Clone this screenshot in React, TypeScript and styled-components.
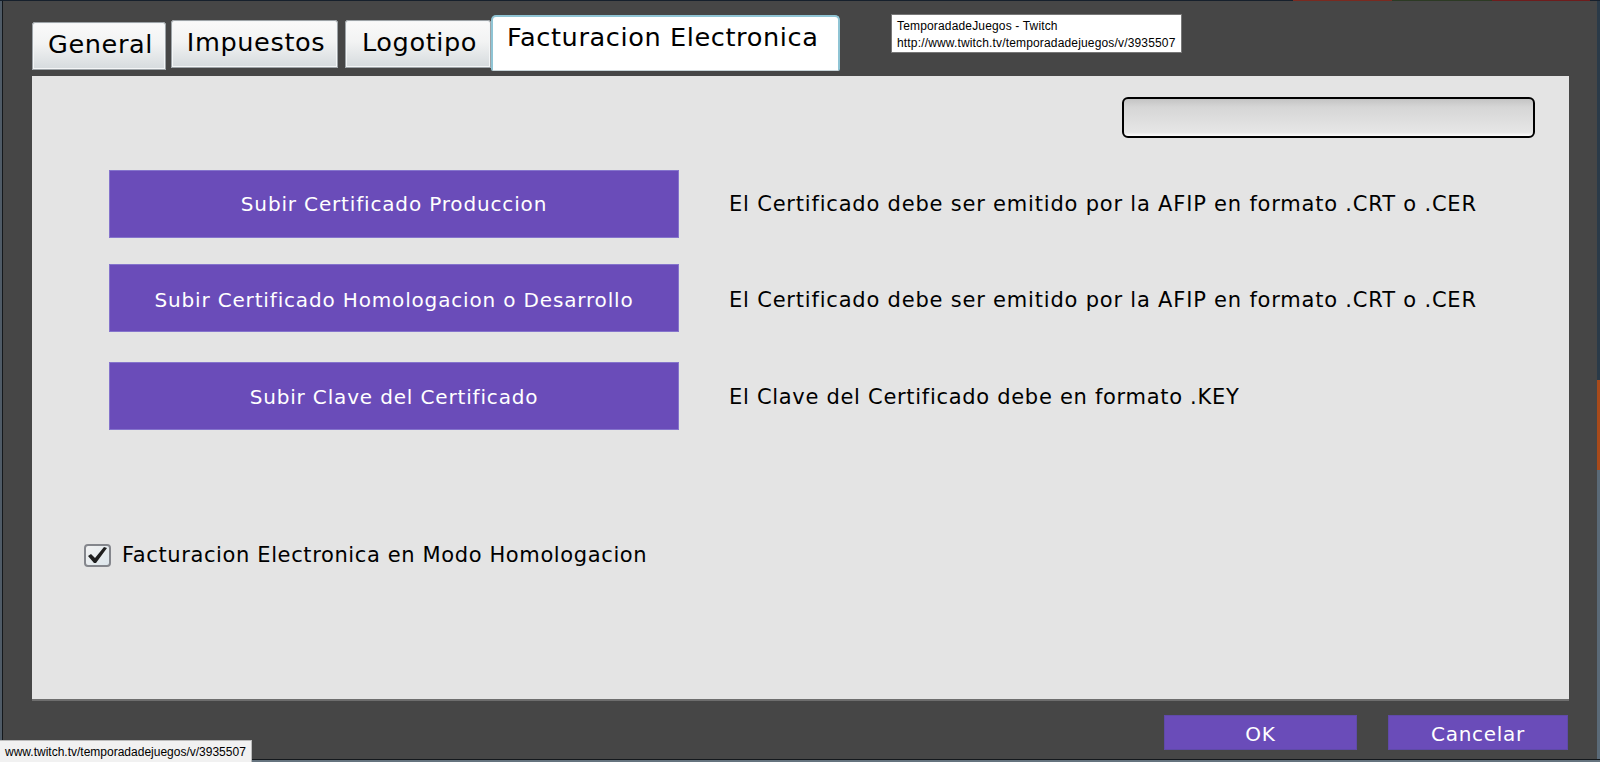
import React from "react";
import styled, { createGlobalStyle } from "styled-components";

const Global = createGlobalStyle`
  html, body { margin: 0; padding: 0; width: 1600px; height: 762px; overflow: hidden; }
  #root { width: 1600px; height: 762px; }
`;

const Desktop = styled.div`
  position: relative;
  width: 1600px;
  height: 762px;
  box-sizing: border-box;
  padding: 1px 3px 3px 3px;
  background:
    linear-gradient(90deg, #16202c 0, #16202c 1293px, #7a2a20 1293px, #7a2a20 1392px, #2c3a24 1392px, #2c3a24 1492px, #6e1c1c 1492px, #6e1c1c 1590px, #16202c 1590px) top left / 100% 1px no-repeat,
    linear-gradient(180deg, #14181c 0, #14181c 1px, #66747f 1px) bottom left / 100% 3px no-repeat,
    linear-gradient(90deg, #4f5b67 0, #4f5b67 2px, #14181c 2px) left top / 3px 100% no-repeat,
    linear-gradient(180deg, #2a3a48 0, #2a3a48 380px, #a84a1a 380px, #a84a1a 470px, #5a6a78 470px) right top / 3px 100% no-repeat;
  font-family: "DejaVu Sans", Verdana, sans-serif;
  color: #000;
`;

const Dialog = styled.div`
  height: 100%;
  box-sizing: border-box;
  background: #464646;
  padding: 14px 28px 9px 29px;
  display: flex;
  flex-direction: column;
`;

const TabBar = styled.div`
  display: flex;
  align-items: flex-start;
  height: 55px;
  margin-bottom: 6px;
`;

const Tab = styled.div<{ $top: number; $width: number; $gap: number }>`
  box-sizing: border-box;
  width: ${(p) => p.$width}px;
  height: 48px;
  margin-top: ${(p) => p.$top}px;
  margin-right: ${(p) => p.$gap}px;
  padding-left: 3px;
  border: 1px solid #f3f6f8;
  outline: 1px solid #9da3a7;
  outline-offset: -1px;
  box-shadow: inset 0 0 0 1px #f4f6f7;
  border-radius: 3px 3px 0 0;
  background: linear-gradient(180deg, #fafafa 0%, #f2f3f3 45%, #d6dbde 100%);
  font-size: 25.6px;
  letter-spacing: 0.6px;
  line-height: 43px;
  text-align: center;
  white-space: nowrap;
`;

const ActiveTab = styled.div`
  box-sizing: border-box;
  width: 349px;
  height: 56px;
  border-radius: 5px 5px 2px 2px;
  background: #fff;
  border: 2px solid #8fc4d4;
  border-bottom: 1px solid #c9d4d8;
  font-size: 25.6px;
  letter-spacing: 0.6px;
  line-height: 40px;
  padding-left: 14px;
  white-space: nowrap;
`;

const Panel = styled.div`
  flex: 1;
  min-height: 0;
  background: #e4e4e4;
  border-bottom: 2px solid #6e6e6e;
  padding: 21px 34px 0 77px;
  display: flex;
  flex-direction: column;
`;

const SearchBox = styled.div`
  align-self: flex-end;
  box-sizing: border-box;
  width: 413px;
  height: 41px;
  border: 2px solid #000;
  border-radius: 6px;
  background: linear-gradient(180deg, #c4c4c4 0%, #d6d6d6 22%, #dedede 55%, #e6e6e6 90%, #fcfcfc 100%);
`;

const ActionList = styled.div`
  display: flex;
  flex-direction: column;
  margin-top: 32px;
`;

const ActionRow = styled.div<{ $gap: number }>`
  display: flex;
  align-items: center;
  height: 68px;
  margin-bottom: ${(p) => p.$gap}px;
`;

const PurpleButton = styled.button<{ $shift: number }>`
  flex: none;
  box-sizing: border-box;
  width: 570px;
  height: 68px;
  padding: ${(p) => p.$shift * 2}px 0 0;
  border: 1px solid #8574cc;
  background: #6a4cb9;
  color: #fff;
  font-family: inherit;
  font-size: 20px;
  letter-spacing: 0.84px;
`;

const Hint = styled.span<{ $shift: number; $spacing: number }>`
  margin-left: 50px;
  padding-top: ${(p) => p.$shift * 2}px;
  font-size: 21px;
  letter-spacing: ${(p) => p.$spacing}px;
  white-space: nowrap;
`;

const CheckRow = styled.label`
  display: flex;
  align-items: center;
  margin: 111px 0 0 -25px;
  font-size: 21px;
  letter-spacing: 0.62px;
  height: 28px;
  white-space: nowrap;
`;

const CheckBox = styled.span`
  box-sizing: border-box;
  flex: none;
  width: 27px;
  height: 23px;
  margin-right: 11px;
  border: 2px solid #84868c;
  border-radius: 4px;
  background: linear-gradient(135deg, #f2f2f2, #dde6ec);
  display: flex;
  align-items: center;
  justify-content: center;
`;

const Footer = styled.div`
  display: flex;
  justify-content: flex-end;
  gap: 31px;
  height: 35px;
  margin-top: 14px;
  padding-right: 1px;
`;

const DialogButton = styled.button<{ $width: number }>`
  box-sizing: border-box;
  width: ${(p) => p.$width}px;
  height: 35px;
  padding: 2px 0 0;
  border: 1px solid #5f4aa8;
  background: #6a4cb9;
  color: #fff;
  font-family: inherit;
  font-size: 20px;
  letter-spacing: 0.7px;
`;

const Tooltip = styled.div`
  position: absolute;
  left: 891px;
  top: 14px;
  box-sizing: border-box;
  width: 291px;
  height: 39px;
  padding: 3px 5px;
  background: #fff;
  border: 1px solid #777;
  font-family: "Liberation Sans", Arial, sans-serif;
  font-size: 12px;
  line-height: 17px;
  letter-spacing: 0.16px;
  white-space: nowrap;
`;

const StatusBubble = styled.div`
  position: absolute;
  left: 0;
  bottom: 0;
  box-sizing: border-box;
  width: 252px;
  height: 22px;
  padding-left: 5px;
  background: #f1f1f1;
  border-top: 1px solid #bbb;
  border-right: 1px solid #bbb;
  font-family: "Liberation Sans", Arial, sans-serif;
  font-size: 12px;
  line-height: 22px;
  white-space: nowrap;
`;

const tabs = [
  { label: "General", top: 7, width: 134, gap: 5 },
  { label: "Impuestos", top: 5, width: 167, gap: 7 },
  { label: "Logotipo", top: 5, width: 146, gap: 0 },
];

const actions = [
  { label: "Subir Certificado Produccion", hint: "El Certificado debe ser emitido por la AFIP en formato .CRT o .CER", gap: 26, shift: 0, spacing: 0.8 },
  { label: "Subir Certificado Homologacion o Desarrollo", hint: "El Certificado debe ser emitido por la AFIP en formato .CRT o .CER", gap: 30, shift: 2, spacing: 0.8 },
  { label: "Subir Clave del Certificado", hint: "El Clave del Certificado debe en formato .KEY", gap: 0, shift: 1, spacing: 0.7 },
];

export default function App() {
  return (
    <Desktop>
      <Global />
      <Dialog>
        <TabBar>
          {tabs.map((t) => (
            <Tab key={t.label} $top={t.top} $width={t.width} $gap={t.gap}>
              {t.label}
            </Tab>
          ))}
          <ActiveTab>Facturacion Electronica</ActiveTab>
        </TabBar>
        <Panel>
          <SearchBox />
          <ActionList>
            {actions.map((a) => (
              <ActionRow key={a.label} $gap={a.gap}>
                <PurpleButton $shift={a.shift}>{a.label}</PurpleButton>
                <Hint $shift={a.shift} $spacing={a.spacing}>{a.hint}</Hint>
              </ActionRow>
            ))}
          </ActionList>
          <CheckRow>
            <CheckBox>
              <svg width="19" height="16" viewBox="0 0 19 16">
                <path d="M0 9 L3 7 L7 11 L16 0 L19 1 L8 16 L6 16 Z" fill="#1f1f1f" />
              </svg>
            </CheckBox>
            Facturacion Electronica en Modo Homologacion
          </CheckRow>
        </Panel>
        <Footer>
          <DialogButton $width={193}>OK</DialogButton>
          <DialogButton $width={180}>Cancelar</DialogButton>
        </Footer>
      </Dialog>
      <Tooltip>
        TemporadadeJuegos - Twitch
        <br />
        http://www.twitch.tv/temporadadejuegos/v/3935507
      </Tooltip>
      <StatusBubble>www.twitch.tv/temporadadejuegos/v/3935507</StatusBubble>
    </Desktop>
  );
}
